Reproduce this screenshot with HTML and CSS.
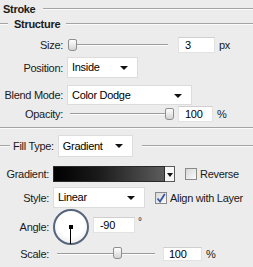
FILE: index.html
```html
<!DOCTYPE html>
<html>
<head>
<meta charset="utf-8">
<link rel="stylesheet" href="styles.css">
</head>
<body>
<div class="panel">
  <div class="title"><span class="title-text">Stroke</span><span class="rule"></span></div>
  <div class="legend"><span class="rule lead"></span><span class="legend-text">Structure</span><span class="rule"></span></div>

  <div class="row r-size s-group">
    <span class="label">Size:</span>
    <div class="slider w-size"><span class="thumb" style="left:0px"></span></div>
    <div class="input w37">3</div>
    <span class="unit">px</span>
  </div>
  <div class="row r-position s-group">
    <span class="label">Position:</span>
    <div class="select w-pos">Inside<span class="arrow"></span></div>
  </div>
  <div class="row r-blend s-group">
    <span class="label">Blend Mode:</span>
    <div class="select w-blend">Color Dodge<span class="arrow"></span></div>
  </div>
  <div class="row r-opacity s-group">
    <span class="label">Opacity:</span>
    <div class="slider w-op"><span class="thumb" style="left:95px"></span></div>
    <div class="input w35">100</div>
    <span class="unit">%</span>
  </div>

  <div class="separator"></div>

  <div class="legend fill-legend">
    <span class="rule lead2"></span><span class="legend-label">Fill Type:</span>
    <div class="select w-fill">Gradient<span class="arrow"></span></div>
    <span class="rule"></span>
  </div>

  <div class="row r-gradient f-group">
    <span class="label">Gradient:</span>
    <div class="gradient"><span class="swatch"></span><span class="gbtn"><span class="arrow small"></span></span></div>
    <span class="check"></span><span class="check-label">Reverse</span>
  </div>
  <div class="row r-style f-group">
    <span class="label">Style:</span>
    <div class="select w-style">Linear<span class="arrow"></span></div>
    <span class="check checked"><svg width="10" height="10" viewBox="0 0 10 10"><path d="M1.5 5.5 L4 8.5 L8.8 1" fill="none" stroke="#3a55a8" stroke-width="1.8"/></svg></span><span class="check-label">Align with Layer</span>
  </div>
  <div class="row r-angle f-group">
    <span class="label">Angle:</span>
    <div class="dial"><span class="dot"></span><span class="hand"></span></div>
    <div class="input w42">-90</div>
    <span class="degree">°</span>
  </div>
  <div class="row r-scale f-group">
    <span class="label">Scale:</span>
    <div class="slider w-scale"><span class="thumb" style="left:56px"></span></div>
    <div class="input w39">100</div>
    <span class="unit">%</span>
  </div>
</div>
</body>
</html>
```

FILE: styles.css
```css
html, body {
  margin: 0;
  padding: 0;
  background: #ececec;
}
body {
  font-family: "Liberation Sans", Arial, sans-serif;
  font-size: 11px;
  letter-spacing: -0.3px;
  color: #1a1a1a;
  width: 253px;
  height: 267px;
  overflow: hidden;
}
.panel {
  display: flex;
  flex-direction: column;
}
.rule {
  flex: 1;
  height: 0;
  border-top: 1px solid #a4a4a4;
  border-bottom: 1px solid #fbfbfb;
}
.title {
  display: flex;
  align-items: center;
  height: 17px;
  padding-left: 3px;
}
.title-text {
  font-weight: bold;
  margin-right: 8px;
}
.legend {
  display: flex;
  align-items: center;
  height: 14px;
}
.rule.lead {
  flex: 0 0 8px;
}
.legend-text {
  font-weight: bold;
  margin: 0 6px;
}
.row {
  display: flex;
  align-items: center;
}
.s-group .label {
  width: 63px;
}
.f-group .label {
  width: 49px;
}
.label {
  text-align: right;
  flex: none;
  margin-right: 4px;
}
.r-size { margin-top: 6px; height: 16px; }
.r-position { margin-top: 4px; height: 21px; }
.r-blend { margin-top: 7px; height: 20px; }
.r-opacity { margin-top: 1px; height: 16px; }

.slider {
  position: relative;
  height: 16px;
  flex: none;
}
.slider::before {
  content: "";
  position: absolute;
  left: 0;
  right: 0;
  top: 7px;
  border-top: 1px solid #9c9c9c;
  border-bottom: 1px solid #fdfdfd;
}
.thumb {
  position: absolute;
  top: 2px;
  width: 7px;
  height: 10px;
  border: 1px solid #8e8e8e;
  border-radius: 2px 2px 3px 3px;
  background: linear-gradient(#ffffff, #d4d4d4);
}
.w-size { width: 100px; margin-left: 1px; margin-right: 10px; }
.w-op { width: 103px; margin-left: 3px; margin-right: 5px; }
.w-scale { width: 98px; margin-left: 4px; margin-right: 8px; }

.input {
  flex: none;
  height: 16px;
  box-sizing: border-box;
  background: #fff;
  border: 1px solid #e2e2e2;
  border-top-color: #cfcfcf;
  padding-left: 6px;
  line-height: 14px;
  color: #000;
}
.w37 { width: 37px; }
.w35 { width: 35px; }
.w42 { width: 42px; }
.w39 { width: 39px; padding-left: 5px; }
.unit {
  margin-left: 4px;
}

.select {
  position: relative;
  flex: none;
  box-sizing: border-box;
  height: 21px;
  background: #fff;
  border: 1px solid #dcdcdc;
  padding-left: 4px;
  line-height: 19px;
  color: #000;
}
.arrow {
  position: absolute;
  right: 9px;
  top: 8px;
  width: 0;
  height: 0;
  border-left: 4px solid transparent;
  border-right: 4px solid transparent;
  border-top: 4px solid #111;
}
.w-pos { width: 71px; }
.w-blend { width: 125px; height: 20px; line-height: 18px; }
.w-fill { width: 75px; height: 22px; line-height: 20px; }
.w-style { width: 92px; }

.separator {
  margin-top: 5px;
  border-top: 1px solid #a4a4a4;
  border-bottom: 1px solid #fbfbfb;
}
.fill-legend {
  margin-top: 6px;
  height: 22px;
}
.rule.lead2 {
  flex: 0 0 10px;
}
.legend-label {
  margin-left: 3px;
  margin-right: 4px;
}
.fill-legend .select {
  margin-right: 9px;
}

.r-gradient { margin-top: 9px; height: 16px; }
.r-style { margin-top: 5px; height: 21px; }
.r-angle { height: 37px; }
.r-scale { margin-top: 2px; height: 14px; }

.gradient {
  display: flex;
  flex: none;
  height: 16px;
  margin-right: 10px;
}
.swatch {
  width: 112px;
  box-sizing: border-box;
  border: 1px solid #2a2a2a;
  background: linear-gradient(to right, #000000 0%, #1a1a1a 40%, #5c5c5c 100%);
}
.gbtn {
  position: relative;
  width: 10px;
  box-sizing: border-box;
  border: 1px solid #5a5a5a;
  border-left: none;
  background: #f6f6f6;
}
.arrow.small {
  right: 1px;
  top: 6px;
  border-left-width: 3px;
  border-right-width: 3px;
  border-top-width: 4px;
}
.check {
  flex: none;
  width: 12px;
  height: 12px;
  box-sizing: border-box;
  border: 1px solid #8a8a8a;
  background: linear-gradient(135deg, #d8d8d8, #fafafa);
  margin-right: 3px;
  display: flex;
  align-items: center;
  justify-content: center;
}
.r-style .select {
  margin-right: 10px;
}
.dial {
  position: relative;
  flex: none;
  width: 36px;
  height: 36px;
  box-sizing: border-box;
  border: 2px solid #56647c;
  border-radius: 50%;
  background: radial-gradient(circle at 50% 40%, #ffffff 50%, #e4e4e4 100%);
  margin-right: 4px;
}
.dot {
  position: absolute;
  left: 14px;
  top: 14px;
  width: 4px;
  height: 4px;
  background: #000;
}
.hand {
  position: absolute;
  left: 15px;
  top: 16px;
  width: 1px;
  height: 17px;
  background: #000;
}
.r-angle .input {
  align-self: flex-start;
  margin-top: 9px;
}
.degree {
  align-self: flex-start;
  margin-top: 8px;
  margin-left: 3px;
  font-size: 10px;
}
.r-scale .input {
  height: 14px;
  line-height: 12px;
}
.r-scale .slider {
  height: 14px;
}
.r-scale .slider::before { top: 6px; }
.r-scale .thumb { top: 0px; height: 10px; }
```
